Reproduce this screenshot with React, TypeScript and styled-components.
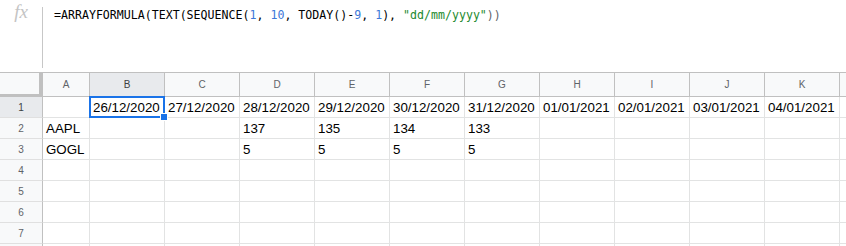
import React from "react";
import styled, { createGlobalStyle } from "styled-components";

const Global = createGlobalStyle`
  html, body { margin: 0; padding: 0; background: #ffffff; }
  body { font-family: "Liberation Sans", Arial, sans-serif; overflow: hidden; }
`;

const Page = styled.div`
  width: 846px;
  height: 246px;
  overflow: hidden;
  background: #fff;
`;

const FormulaBar = styled.div`
  display: flex;
  height: 72px;
`;

const FxBox = styled.div`
  width: 42px;
  display: flex;
  justify-content: center;
  padding-top: 2px;
  box-sizing: border-box;
  font-family: "Liberation Serif", "Times New Roman", serif;
  font-style: italic;
  font-size: 19px;
  color: #c4c4c4;
  line-height: 20px;
`;

const Divider = styled.div`
  width: 1px;
  margin: 7px 0 4px;
  background: #c7c7c7;
`;

const FormulaText = styled.div`
  padding: 8px 0 0 11px;
  font-family: "DejaVu Sans Mono", "Liberation Mono", monospace;
  font-size: 11.6px;
  color: #000;
  white-space: pre;
`;

const Tok = styled.span<{ $kind: "num" | "str" | "paren" }>`
  color: ${(p) =>
    p.$kind === "num" ? "#3c78d8" : p.$kind === "str" ? "#1e8a2e" : "#5f6368"};
`;

const Grid = styled.div`
  display: grid;
  grid-template-columns: 43px 47px repeat(11, 75px);
  grid-auto-rows: 21px;
  grid-template-rows: 25px;
`;

const Corner = styled.div`
  background: #f8f9fa;
  border-top: 1px solid #c0c0c0;
  border-right: 4px solid #c0c0c0;
  border-bottom: 3px solid #c0c0c0;
  box-sizing: border-box;
`;

const ColHead = styled.div<{ $sel?: boolean }>`
  background: ${(p) => (p.$sel ? "#e8eaed" : "#f8f9fa")};
  color: ${(p) => (p.$sel ? "#3c4043" : "#5f6368")};
  border-top: 1px solid #c0c0c0;
  border-right: 1px solid #c0c0c0;
  border-bottom: 1px solid #c0c0c0;
  box-sizing: border-box;
  display: flex;
  align-items: center;
  justify-content: center;
  font-size: 10px;
`;

const RowHead = styled.div<{ $sel?: boolean }>`
  background: ${(p) => (p.$sel ? "#e8eaed" : "#f8f9fa")};
  color: ${(p) => (p.$sel ? "#3c4043" : "#5f6368")};
  border-right: 1px solid #c0c0c0;
  border-bottom: 1px solid #e0e0e0;
  box-sizing: border-box;
  display: flex;
  align-items: center;
  justify-content: center;
  font-size: 10px;
`;

const Cell = styled.div`
  position: relative;
  border-right: 1px solid #e2e3e3;
  border-bottom: 1px solid #e2e3e3;
  box-sizing: border-box;
  display: flex;
  align-items: center;
  padding: 0 3px;
  font-size: 13.33px;
  color: #000;
  white-space: nowrap;
`;

const Selection = styled.div`
  position: absolute;
  z-index: 3;
  top: -1px;
  left: -1px;
  right: -1px;
  bottom: -1px;
  border: 2px solid #1a73e8;
  pointer-events: none;
`;

const Handle = styled.div`
  position: absolute;
  right: -5px;
  bottom: -5px;
  width: 6px;
  height: 6px;
  background: #1a73e8;
  border: 1px solid #fff;
`;

const cols = ["A", "B", "C", "D", "E", "F", "G", "H", "I", "J", "K", ""];
const dates = [
  "26/12/2020",
  "27/12/2020",
  "28/12/2020",
  "29/12/2020",
  "30/12/2020",
  "31/12/2020",
  "01/01/2021",
  "02/01/2021",
  "03/01/2021",
  "04/01/2021",
];

const rows: string[][] = [
  ["", ...dates, ""],
  ["AAPL", "", "", "137", "135", "134", "133", "", "", "", "", ""],
  ["GOGL", "", "", "5", "5", "5", "5", "", "", "", "", ""],
  Array(12).fill(""),
  Array(12).fill(""),
  Array(12).fill(""),
  Array(12).fill(""),
  Array(12).fill(""),
];

export default function App() {
  return (
    <Page>
      <Global />
      <FormulaBar>
        <FxBox>fx</FxBox>
        <Divider />
        <FormulaText>
          =ARRAYFORMULA(TEXT(SEQUENCE(<Tok $kind="num">1</Tok>,{" "}
          <Tok $kind="num">10</Tok>, TODAY()-<Tok $kind="num">9</Tok>,{" "}
          <Tok $kind="num">1</Tok>), <Tok $kind="str">"dd/mm/yyyy"</Tok>
          <Tok $kind="paren">))</Tok>
        </FormulaText>
      </FormulaBar>
      <Grid>
        <Corner />
        {cols.map((c, i) => (
          <ColHead key={i} $sel={c === "B"}>
            {c}
          </ColHead>
        ))}
        {rows.map((r, ri) => (
          <React.Fragment key={ri}>
            <RowHead $sel={ri === 0}>{ri < 7 ? ri + 1 : ""}</RowHead>
            {r.map((v, ci) => (
              <Cell key={ci}>
                {v}
                {ri === 0 && ci === 1 && (
                  <Selection>
                    <Handle />
                  </Selection>
                )}
              </Cell>
            ))}
          </React.Fragment>
        ))}
      </Grid>
    </Page>
  );
}
